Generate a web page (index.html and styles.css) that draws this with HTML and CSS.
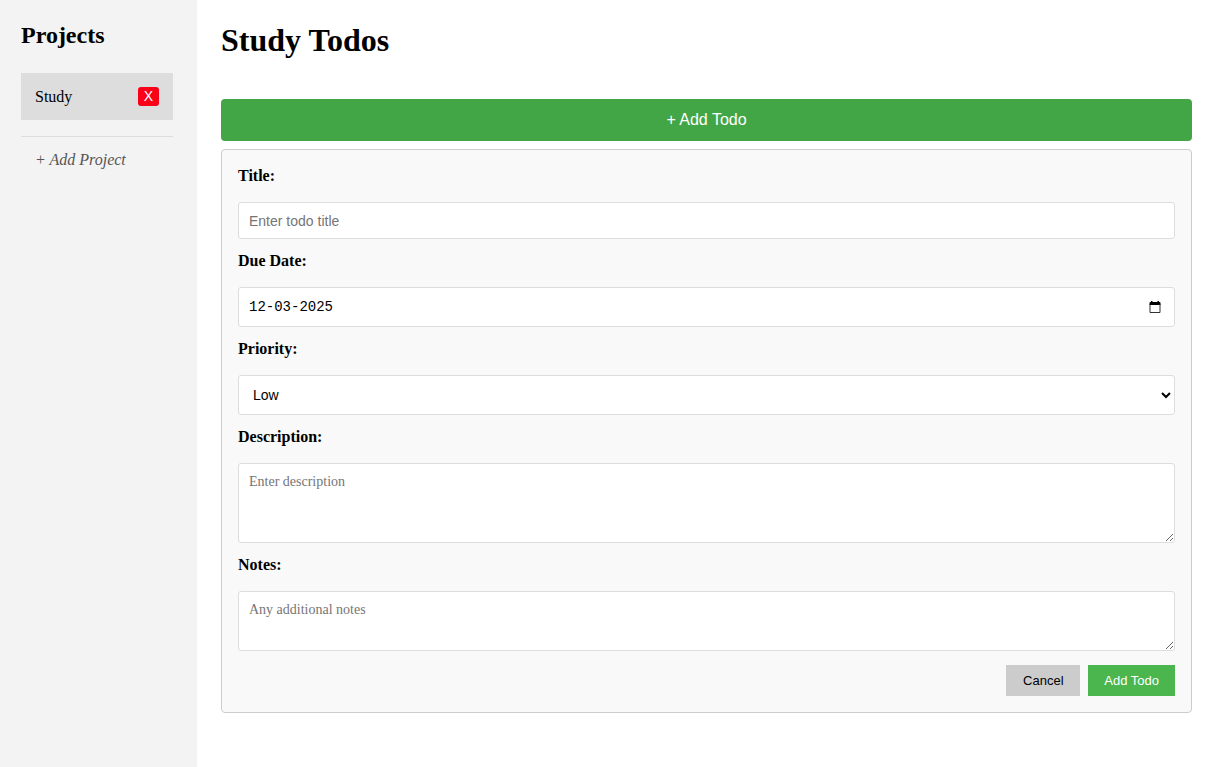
FILE: index.html
```html
<!DOCTYPE html>
<html lang="en">
<head>
<meta charset="utf-8">
<meta name="viewport" content="width=device-width, initial-scale=1">
<title>Study Todos</title>
<link rel="stylesheet" href="styles.css">
</head>
<body>
<div class="app">
  <aside class="sidebar">
    <h2 class="sidebar-title">Projects</h2>
    <div class="project">
      <span>Study</span>
      <button class="project-delete" type="button" aria-label="Delete Study">X</button>
    </div>
    <button class="project-add" type="button">+ Add Project</button>
  </aside>
  <main class="main">
    <h1 class="main-title">Study Todos</h1>
    <button class="todo-open" type="button">+ Add Todo</button>
    <form class="todo-form">
      <div class="field">
        <label class="label" for="title">Title:</label>
        <input class="control title-input" id="title" type="text" placeholder="Enter todo title">
      </div>
      <div class="field">
        <label class="label" for="due">Due Date:</label>
        <div class="control date">
          <input class="date-input" id="due" type="text" value="12-03-2025">
          <button class="date-button" type="button" aria-label="Choose date">
            <svg width="12" height="13" viewBox="0 0 12 13"><path fill="#000" d="M2 0h1.500v1h5V0H10v1h.500a1 1 0 0 1 1 1v2H.500V2a1 1 0 0 1 1-1H2z"/><path fill="none" stroke="#333" d="M1 3v8.500h10V3"/></svg>
          </button>
        </div>
      </div>
      <div class="field">
        <label class="label" for="priority">Priority:</label>
        <select class="control priority" id="priority">
          <option>Low</option>
          <option>Medium</option>
          <option>High</option>
        </select>
      </div>
      <div class="field">
        <label class="label" for="description">Description:</label>
        <textarea class="control text-area description" id="description" placeholder="Enter description"></textarea>
      </div>
      <div class="field">
        <label class="label" for="notes">Notes:</label>
        <textarea class="control text-area notes" id="notes" placeholder="Any additional notes"></textarea>
      </div>
      <div class="actions">
        <button class="action cancel" type="button">Cancel</button>
        <button class="action submit" type="button">Add Todo</button>
      </div>
    </form>
  </main>
</div>
</body>
</html>
```

FILE: styles.css
```css
* {
  box-sizing: border-box;
}

body {
  margin: 0;
  background: #fff;
  color: #000;
  font: 16px/18px "Liberation Serif", "Times New Roman", serif;
}

button,
input,
select {
  font-family: "Liberation Sans", Arial, sans-serif;
}

button {
  border: 0;
  cursor: pointer;
}

.app {
  display: flex;
  min-height: 100vh;
}

.sidebar {
  flex: 0 0 197px;
  padding: 21px 24px 21px 21px;
  background: #f3f3f3;
}

.sidebar-title {
  margin: 0 0 24px;
  font-size: 24px;
  line-height: 28px;
}

.project {
  display: flex;
  align-items: center;
  justify-content: space-between;
  padding: 14px;
  background: #ddd;
}

.project-delete {
  padding: 1px 6px;
  border-radius: 3px;
  background: #fa0019;
  color: #fff;
  font-size: 14px;
  line-height: 17px;
}

.project-add {
  width: 100%;
  margin-top: 16px;
  padding: 14px;
  border-top: 1px solid #ddd;
  background: none;
  color: #555;
  font: italic 16px/18px "Liberation Serif", "Times New Roman", serif;
  text-align: left;
}

.main {
  flex: 1;
  min-width: 0;
  padding: 22px 21px 22px 24px;
}

.main-title {
  margin: 0 0 40px;
  font-size: 32px;
  line-height: 37px;
}

.todo-open {
  display: block;
  width: 100%;
  padding: 12px;
  border-radius: 4px;
  background: #43a646;
  color: #fff;
  font-size: 16px;
  line-height: 18px;
}

.todo-form {
  display: flex;
  flex-direction: column;
  gap: 12px;
  margin-top: 8px;
  padding: 16px;
  border: 1px solid #ccc;
  border-radius: 4px;
  background: #f9f9f9;
}

.field {
  display: flex;
  flex-direction: column;
  gap: 16px;
}

.label {
  font-weight: bold;
  line-height: 20px;
}

.control {
  width: 100%;
  margin: 0;
  border: 1px solid #ddd;
  border-radius: 3px;
  background: #fff;
  color: #000;
  font-size: 14px;
}

.title-input {
  height: 37px;
  padding: 0 10px;
}

.title-input::placeholder,
.text-area::placeholder {
  color: #757575;
}

.date {
  display: flex;
  align-items: center;
  height: 40px;
  padding: 0 10px;
}

.date-input {
  flex: 1;
  min-width: 0;
  padding: 0;
  border: 0;
  outline: 0;
  background: none;
  font: 14px "Liberation Mono", "Courier New", monospace;
}

.date-button {
  display: flex;
  padding: 3px;
  background: none;
}

.priority {
  height: 40px;
  padding: 0 10px;
}

.text-area {
  display: block;
  padding: 10px;
  font-family: "Liberation Serif", "Times New Roman", serif;
  resize: vertical;
}

.description {
  height: 80px;
}

.notes {
  height: 60px;
}

.actions {
  display: flex;
  justify-content: flex-end;
  gap: 8px;
  padding-top: 2px;
}

.action {
  min-width: 74px;
  padding: 8px 16px;
  font-size: 13px;
  line-height: 15px;
}

.cancel {
  background: #ccc;
  color: #000;
}

.submit {
  background: #4bb54e;
  color: #fff;
}
```
